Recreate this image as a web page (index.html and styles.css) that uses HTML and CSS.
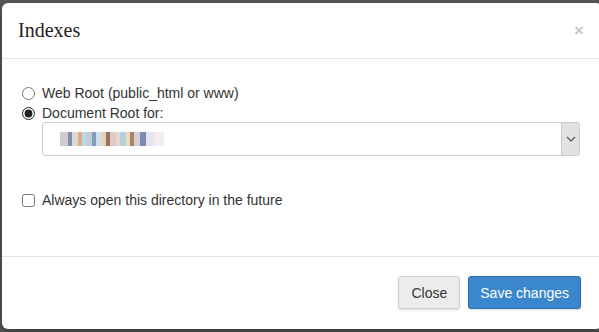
FILE: index.html
```html
<html>

<head>
    <title>Indexes</title>
    <link rel="stylesheet" href="styles.css">
</head>

<body>
    <div class="backdrop">
        <div class="modal">
            <div class="modal_header">
                <div class="modal_title">Indexes</div>
                <div class="close_x">&times;</div>
            </div>
            <div class="modal_body">
                <label class="option"><input type="radio" name="root"> Web Root (public_html or www)</label>
                <label class="option"><input type="radio" name="root" checked> Document Root for:</label>
                <div class="select_box">
                    <div class="select_value">
                        <div class="pix"></div>
                    </div>
                    <div class="select_arrow">
                        <svg width="10" height="6" viewBox="0 0 10 6"><path d="M1 1 L5 5 L9 1" fill="none" stroke="#555" stroke-width="1.2"/></svg>
                    </div>
                </div>
                <label class="option always"><input type="checkbox"> Always open this directory in the future</label>
            </div>
            <div class="modal_footer">
                <div class="btn btn_default">Close</div>
                <div class="btn btn_primary">Save changes</div>
            </div>
        </div>
    </div>
</body>

</html>
```

FILE: styles.css
```css
body {
    margin: 0;
    background-color: #585858;
    font-family: "Liberation Sans", Arial, sans-serif;
    color: #333;
}

.backdrop {
    padding: 3px 0 0 2px;
    height: 332px;
    box-sizing: border-box;
    overflow: hidden;
}

.modal {
    background-color: #fff;
    width: 600px;
    height: 326px;
    border-radius: 6px;
    box-shadow: 0 3px 9px rgba(0, 0, 0, 0.4);
}

.modal_header {
    display: flex;
    justify-content: space-between;
    align-items: center;
    height: 55px;
    padding: 0 18px 0 16px;
    border-bottom: 1px solid #e5e5e5;
}

.modal_title {
    font-family: "Liberation Serif", Georgia, serif;
    font-size: 20px;
    color: #222;
}

.close_x {
    font-size: 17px;
    font-weight: bold;
    color: #c8c8c8;
}

.modal_body {
    padding: 26px 22px 0 20px;
    height: 171px;
    border-bottom: 1px solid #e5e5e5;
    font-size: 14px;
}

.option {
    display: flex;
    align-items: center;
    height: 16px;
    margin-bottom: 4px;
}

.option input {
    margin: 0 7px 0 0;
    width: 13px;
    height: 13px;
    accent-color: #222;
}

.select_box {
    display: flex;
    height: 32px;
    margin: -3px 0 0 20px;
    border: 1px solid #ccc;
    border-radius: 3px;
}

.select_value {
    flex: 1;
    display: flex;
    align-items: center;
    padding-left: 17px;
}

.pix {
    width: 104px;
    height: 14px;
    background-image:
        linear-gradient(90deg, #c9c2c7 0 8px, #6a7aa0 8px 12px, #d9d0cc 12px 18px, #d89c72 18px 22px, #a8d6e4 22px 26px, #b8c4d6 26px 32px, #7088b0 32px 36px, #c8d8e0 36px 42px, #e8c8a0 42px 46px, #805848 46px 50px, #d8c0b8 50px 56px, #e0d0c0 56px 60px, #a8c8d8 60px 66px, #e8d8b0 66px 70px, #9c6c50 70px 74px, #d0c8c8 74px 80px, #6078a8 80px 86px, #e0e0e8 86px 94px, #f0e8f0 94px 104px);
    opacity: 0.85;
}

.select_arrow {
    width: 17px;
    display: flex;
    align-items: center;
    justify-content: center;
    background-color: #e2e2e2;
    border-left: 1px solid #ccc;
}

.always {
    margin-top: 36px;
}

.modal_footer {
    display: flex;
    justify-content: flex-end;
    gap: 8px;
    padding: 19px 19px 0 0;
}

.btn {
    height: 33px;
    box-sizing: border-box;
    display: flex;
    align-items: center;
    padding: 0 12px;
    font-size: 14px;
    border-radius: 3px;
    border: 1px solid;
}

.btn_default {
    background-color: #ececec;
    border-color: #d0d0d0;
    color: #333;
    box-shadow: 0 1px 2px rgba(0, 0, 0, 0.15);
}

.btn_primary {
    padding: 0 11px 0 11px;
    margin-right: 2px;
    background-color: #3a87cd;
    border-color: #2e6da8;
    color: #fff;
    box-shadow: 0 1px 2px rgba(0, 0, 0, 0.15);
}
```
